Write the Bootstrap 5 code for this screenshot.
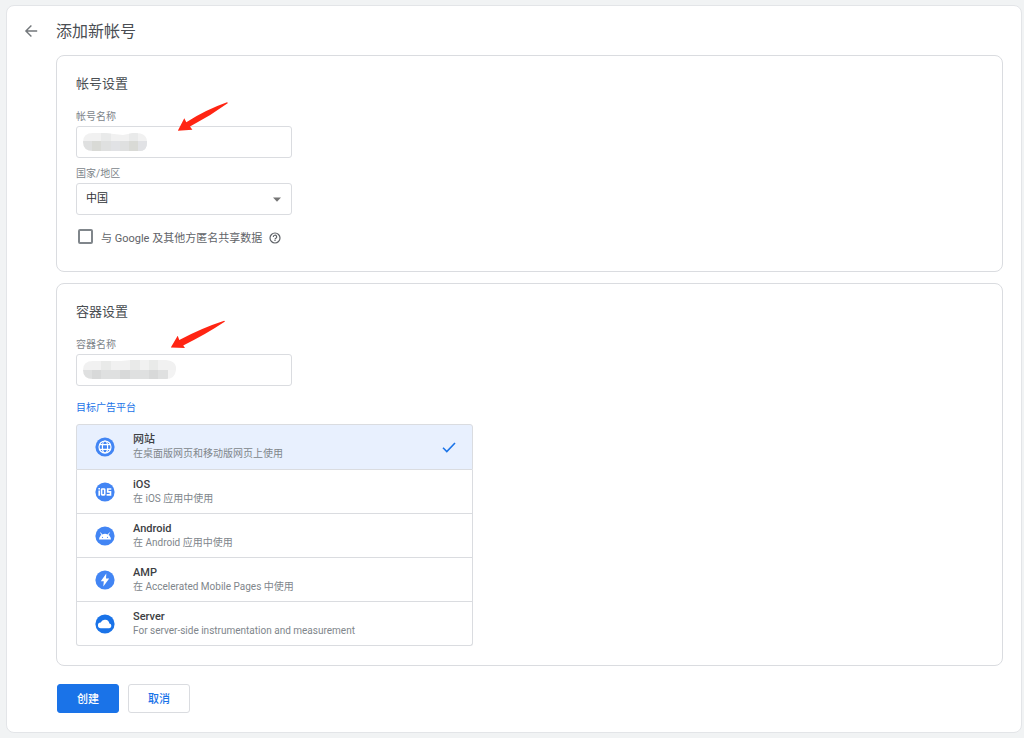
<!DOCTYPE html>
<html lang="zh-CN">
<head>
<meta charset="utf-8">
<meta name="viewport" content="width=device-width, initial-scale=1">
<title>添加新帐号</title>
<link href="https://cdn.jsdelivr.net/npm/bootstrap@5.3.0/dist/css/bootstrap.min.css" rel="stylesheet">
<style>
  body { background: #f1f3f4; color: #4a4e53; font-family: Roboto, "Noto Sans CJK SC", sans-serif; font-size: 11px; line-height: 16px; padding: 5px 2px 5px 6px; }
  .panel { background: #fff; border: 1px solid #e3e5e8; border-radius: 8px; padding: 0 18px 19px 49px; }
  .page-head { height: 49px; margin-left: -32px; gap: 18px; }
  .page-head h1 { font-size: 16px; line-height: 24px; font-weight: 400; padding-top: 2px; }
  .back { width: 14px; height: 14px; color: #73777b; }
  .settings { border: 1px solid #dadce0; border-radius: 8px; padding: 18px 19px 19px; }
  .settings + .settings { margin-top: 11px; }
  .settings h2 { font-size: 13px; line-height: 20px; font-weight: 400; margin-bottom: 15px; }
  .field { width: 216px; }
  .field label { display: block; font-size: 10px; color: #80868b; margin-bottom: 1px; }
  .box { height: 32px; border: 1px solid #dadce0; border-radius: 3px; font-size: 11px; padding: 0 9px; color: #303336; background-color: #fff; appearance: none; }
  .redacted { left: 7px; bottom: 6px; }
  .pointer-a { left: 101px; top: -8px; }
  .pointer-b { left: 94px; top: -17px; }
  .pointer-a, .pointer-b { fill: #ff2513; }
  .caret { right: 11px; bottom: 13px; fill: #757575; }
  .share { gap: 7px; margin: 13px 0 4px 2px; height: 20px; color: #5f6368; }
  .share input { appearance: none; width: 15px; height: 15px; border: 2px solid #80868b; border-radius: 2px; margin: 0 1px 3px 0; background: #fff; }
  .share input:checked { background: #1a73e8; }
  .share label { padding-top: 1px; }
  .target { display: inline-block; font-size: 10px; color: #1a73e8; margin: 14px 0 8px; }
  .platforms { max-width: 397px; --bs-list-group-border-color: #dadce0; --bs-list-group-border-radius: 3px; }
  .platforms .list-group-item { min-height: 44px; padding: 0 16px 0 18px; gap: 18px; background: #fff; color: #3c4043; }
  .platforms .list-group-item:first-child { min-height: 46px; }
  .platforms .list-group-item.chosen { background: #e8f0fe; }
  .platforms strong { display: block; font-weight: 500; line-height: 14px; }
  .platforms small { display: block; font-size: 10px; line-height: 14px; color: #80868b; }
  .actions { gap: 9px; margin-top: 18px; padding-left: 1px; }
  .actions .btn { width: 62px; height: 29px; font-size: 11px; line-height: 16px; padding: 2px 0 0; border-radius: 3px; font-weight: 500; }
  .create { background: #1a73e8; color: #fff; border-color: #1a73e8; }
  .cancel { background: #fff; color: #1a73e8; border-color: #dadce0; }
</style>
</head>
<body>
<main class="panel">
  <header class="page-head d-flex align-items-center">
    <button type="button" class="back btn p-0 border-0 d-flex" aria-label="返回">
      <svg width="14" height="14" viewBox="0 0 14 14" fill="none" stroke="currentColor" stroke-width="1.4"><path d="M13.2 7H2M7.400 1.500 1.900 7 7.400 12.500"/></svg>
    </button>
    <h1 class="mb-0">添加新帐号</h1>
  </header>

  <section class="settings">
    <h2>帐号设置</h2>
    <div class="field position-relative">
      <label for="account">帐号名称</label>
      <input id="account" type="text" class="box w-100 d-block">
      <svg class="redacted position-absolute" width="64" height="20" viewBox="0 0 64 20">
        <clipPath id="pillA"><path d="M10 1H22L40 3 50 1Q64 0 64 10T55 19H10Q0 19 0 10T10 1Z"/></clipPath>
        <g clip-path="url(#pillA)">
          <path fill="#f1f1f1" d="M0 0h64v9H0z"/><path fill="#e9eaea" d="M18 0h10v9H18zM46 0h9v9h-9z"/>
          <path fill="#dfe0e0" d="M0 9h64v11H0z"/><path fill="#d9dad6" d="M9 9h9v11H9zM46 9h9v11h-9z"/><path fill="#e1e2e5" d="M28 9h9v11h-9zM55 9h9v11h-9z"/>
        </g>
      </svg>
      <svg class="pointer-a position-absolute" width="52" height="32" viewBox="177 100 52 32"><path d="M177.800 129.700 184.300 117.200 186.300 121.200Q205 109 227 101.200L228 101.900Q210 115 190 125.600L192.400 128.800Z"/></svg>
    </div>
    <div class="field position-relative mt-2">
      <label for="country">国家/地区</label>
      <select id="country" class="box w-100 d-block"><option>中国</option></select>
      <svg class="caret position-absolute pe-none" width="8" height="5" viewBox="0 0 8 5"><path d="M0 .5h8L4 4.800z"/></svg>
    </div>
    <div class="share d-flex align-items-center">
      <input id="share" type="checkbox">
      <label for="share">与 Google 及其他方匿名共享数据</label>
      <svg width="12" height="12" viewBox="0 0 12 12" fill="none" stroke="#5f6368" stroke-width="1.200"><circle cx="6" cy="6" r="5"/><path d="M4.300 4.900a1.700 1.600 0 1 1 2.600 1.300Q6 6.800 6 7.400M6 8.100v1"/></svg>
    </div>
  </section>

  <section class="settings">
    <h2>容器设置</h2>
    <div class="field position-relative">
      <label for="container-name">容器名称</label>
      <input id="container-name" type="text" class="box w-100 d-block">
      <svg class="redacted position-absolute" width="94" height="20" viewBox="0 0 94 20">
        <clipPath id="pillB"><path d="M10 1H38L48 0H83Q94 1 93 10T83 19H10Q0 19 0 10T10 1Z"/></clipPath>
        <g clip-path="url(#pillB)">
          <path fill="#f1f1f1" d="M0 0h94v10H0z"/><path fill="#e9eae9" d="M18 0h10v10H18zM47 0h10v10H47zM66 0h9v10h-9z"/>
          <path fill="#dfe0e0" d="M0 10h85v10H0z"/><path fill="#d8d9d9" d="M9 10h9v10H9zM37 10h10v10H37zM66 10h9v10h-9z"/><path fill="#f3f3f3" d="M85 10h9v10h-9z"/>
        </g>
      </svg>
      <svg class="pointer-b position-absolute" width="56" height="30" viewBox="170 320 56 30"><path d="M170.800 347.600 177.700 335.700 179.300 340Q202 328 224.200 320.800L225 321.600Q205 335 183.200 345.400L185 348Z"/></svg>
    </div>
    <a class="target text-decoration-none" href="#platforms">目标广告平台</a>
    <div id="platforms" class="platforms list-group">
      <button type="button" class="list-group-item list-group-item-action chosen d-flex align-items-center" aria-pressed="true">
        <svg width="20" height="20" viewBox="0 0 20 20"><circle cx="10" cy="10" r="9.600" fill="#4285f4"/><g fill="none" stroke="#fff" stroke-width="1.200"><circle cx="10" cy="10" r="6"/><ellipse cx="10" cy="10" rx="2.600" ry="6"/><path d="M4.800 7.700h10.400M4.800 12.300h10.400"/></g></svg>
        <span class="flex-grow-1"><strong>网站</strong><small>在桌面版网页和移动版网页上使用</small></span>
        <svg width="14" height="11" viewBox="0 0 14 11" fill="none" stroke="#1a73e8" stroke-width="1.600"><path d="M1 5.800 4.800 9.500 13 1"/></svg>
      </button>
      <button type="button" class="list-group-item list-group-item-action d-flex align-items-center">
        <svg width="20" height="20" viewBox="0 0 20 20"><circle cx="10" cy="10" r="9.600" fill="#4285f4"/><g fill="none" stroke="#fff" stroke-width="1.600"><path d="M4.200 8.400v5.300M4.200 6v1.500"/><rect x="6.600" y="7" width="3.100" height="5.900" rx=".6"/><path d="M16.300 7h-3.600v2.900h2.800v3h-3.900"/></g></svg>
        <span class="flex-grow-1"><strong>iOS</strong><small>在 iOS 应用中使用</small></span>
      </button>
      <button type="button" class="list-group-item list-group-item-action d-flex align-items-center">
        <svg width="20" height="20" viewBox="0 0 20 20"><circle cx="10" cy="10" r="9.600" fill="#4285f4"/><path d="M4 13.600a6 5.800 0 0 1 12 0z" fill="#fff"/><path d="M5.500 6.600 7 9M14.500 6.600 13 9" stroke="#fff"/><circle cx="7.500" cy="11.300" r=".6" fill="#4285f4"/><circle cx="12.500" cy="11.300" r=".6" fill="#4285f4"/></svg>
        <span class="flex-grow-1"><strong>Android</strong><small>在 Android 应用中使用</small></span>
      </button>
      <button type="button" class="list-group-item list-group-item-action d-flex align-items-center">
        <svg width="20" height="20" viewBox="0 0 20 20"><circle cx="10" cy="10" r="9.600" fill="#4285f4"/><path d="M11.300 3.400 5.800 11.300h3L8.300 16.600 14.200 8.600h-3.200z" fill="#fff"/></svg>
        <span class="flex-grow-1"><strong>AMP</strong><small>在 Accelerated Mobile Pages 中使用</small></span>
      </button>
      <button type="button" class="list-group-item list-group-item-action d-flex align-items-center">
        <svg width="20" height="20" viewBox="0 0 20 20"><circle cx="10" cy="10" r="9.600" fill="#1a73e8"/><path d="M6 14.300a2.900 2.900 0 0 1-.3-5.800 4.600 4.600 0 0 1 8.700.9 2.500 2.500 0 0 1-.1 4.900z" fill="#fff"/></svg>
        <span class="flex-grow-1"><strong>Server</strong><small>For server-side instrumentation and measurement</small></span>
      </button>
    </div>
  </section>

  <div class="actions d-flex">
    <button type="button" class="btn create">创建</button>
    <button type="button" class="btn cancel">取消</button>
  </div>
</main>
<script src="https://cdn.jsdelivr.net/npm/bootstrap@5.3.0/dist/js/bootstrap.bundle.min.js"></script>
</body>
</html>
